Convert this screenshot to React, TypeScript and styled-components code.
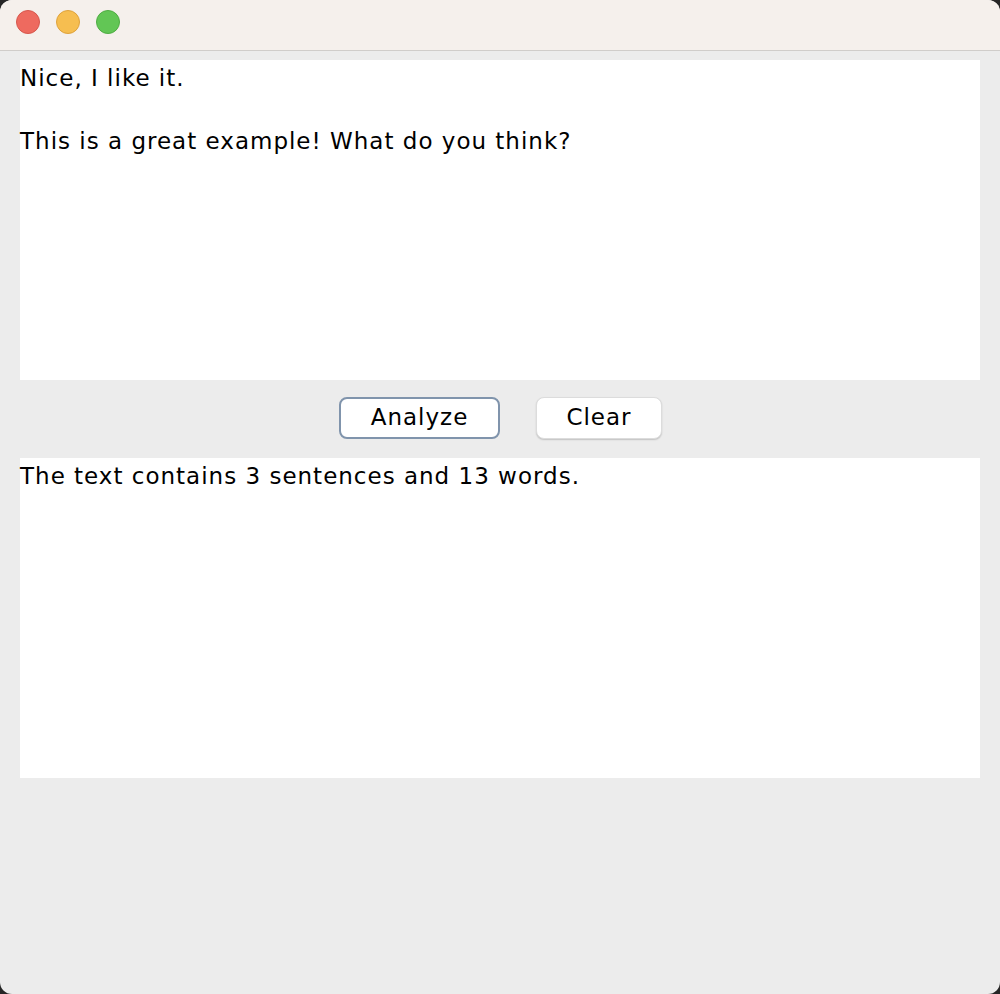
import React from "react";
import styled, { createGlobalStyle } from "styled-components";

const Global = createGlobalStyle`
  html, body { margin: 0; padding: 0; background: #262626; }
  * { box-sizing: border-box; }
`;

const Window = styled.div`
  width: 1000px;
  height: 994px;
  border-radius: 12px;
  overflow: hidden;
  background: #ececec;
  display: flex;
  flex-direction: column;
  font-family: "DejaVu Sans", "Liberation Sans", sans-serif;
`;

const TitleBar = styled.div`
  height: 51px;
  flex: none;
  background: #f5f0ec;
  border-bottom: 1px solid #d0cdca;
  display: flex;
  align-items: center;
  gap: 16px;
  padding: 0 0 6px 16px;
`;

const Light = styled.span<{ $c: string; $b: string }>`
  width: 24px;
  height: 24px;
  border-radius: 50%;
  background: ${(p) => p.$c};
  border: 1px solid ${(p) => p.$b};
`;

const Content = styled.div`
  display: flex;
  flex-direction: column;
  padding: 9px 20px 0;
`;

const TextArea = styled.div<{ $top: number }>`
  height: 320px;
  background: #ffffff;
  color: #000;
  font-size: 23px;
  letter-spacing: 1px;
  line-height: 31.5px;
  white-space: pre-wrap;
  padding: ${(p) => p.$top}px 0 0 0;
`;

const ButtonRow = styled.div`
  display: flex;
  justify-content: center;
  gap: 36px;
  padding: 17px 0 19px;
`;

const Button = styled.button<{ $focused?: boolean; $w: number }>`
  width: ${(p) => p.$w}px;
  height: 42px;
  background: #fff;
  border-radius: 8px;
  font-family: inherit;
  font-size: 23px;
  letter-spacing: 1px;
  color: #000;
  padding: 0 0 2px 1px;
  border: ${(p) => (p.$focused ? "2px solid #8094ac" : "1px solid #dcdcdc")};
  box-shadow: ${(p) => (p.$focused ? "none" : "0 1px 1.5px rgba(0,0,0,0.18)")};
`;

export default function App() {
  return (
    <>
      <Global />
      <Window>
        <TitleBar>
          <Light $c="#ee6a5f" $b="#d6574d" />
          <Light $c="#f6be50" $b="#dea23c" />
          <Light $c="#62c655" $b="#4fac43" />
        </TitleBar>
        <Content>
          <TextArea $top={3}>{"Nice, I like it.\n\nThis is a great example! What do you think?"}</TextArea>
          <ButtonRow>
            <Button $focused $w={161}>Analyze</Button>
            <Button $w={126}>Clear</Button>
          </ButtonRow>
          <TextArea $top={3}>{"The text contains 3 sentences and 13 words."}</TextArea>
        </Content>
      </Window>
    </>
  );
}
